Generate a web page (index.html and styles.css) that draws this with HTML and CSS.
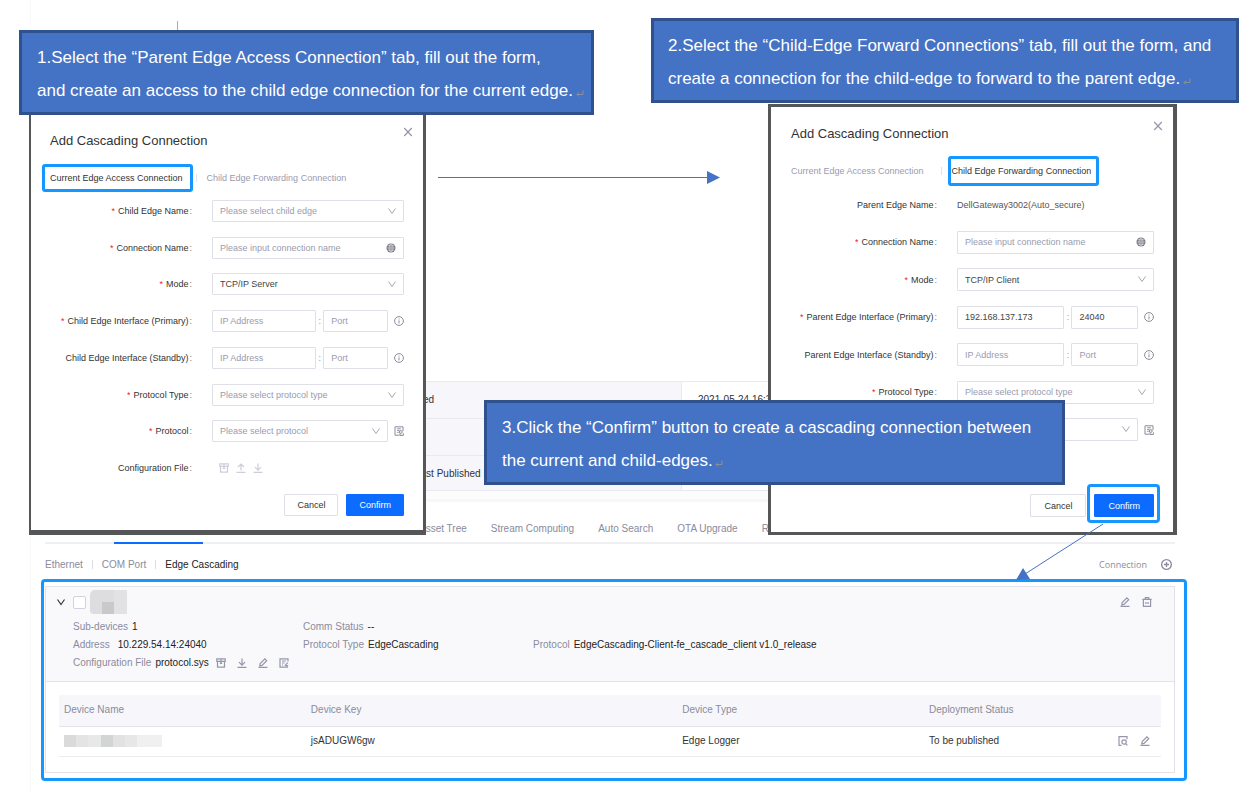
FILE: index.html
```html
<!DOCTYPE html>
<html lang="en">
<head>
<meta charset="utf-8">
<title>Add Cascading Connection</title>
<link rel="stylesheet" href="styles.css">
</head>
<body>
<svg class="sprite" aria-hidden="true">
  <symbol id="chevron" viewBox="0 0 10 10"><path d="M1.5 2.5 5 7.5 8.5 2.5"/></symbol>
  <symbol id="close" viewBox="0 0 10 10"><path d="M1.2 1 8.8 9M8.8 1 1.2 9"/></symbol>
  <symbol id="globe" viewBox="0 0 10 10"><circle cx="5" cy="5" r="4.5" fill="currentColor" stroke="none"/><g stroke="#fff" stroke-width=".5"><ellipse cx="5" cy="5" rx="2" ry="4.2"/><path d="M5 .8v8.4M.8 5h8.4M1.5 2.8h7M1.5 7.2h7"/></g></symbol>
  <symbol id="info" viewBox="0 0 10 10"><circle cx="5" cy="5" r="4.4"/><path d="M5 4.4v3M5 2.5v1"/></symbol>
  <symbol id="doc" viewBox="0 0 10 10"><path d="M9 5V.8H1v8.4h4.5M3.2 2.8h3.6M3.2 4.6h2.2M3.2 6.4h1.4"/><circle cx="6.8" cy="6" r="1.4"/><path d="M6 7.5v1.9h3.4V7.3"/></symbol>
  <symbol id="box" viewBox="0 0 10 10"><path d="M.8.9h8.4v2.4H.8zM1.5 3.3v5.8h7V3.3M3.8 5.3h2.4M5 .9v4.4"/></symbol>
  <symbol id="up" viewBox="0 0 10 10"><path d="M5 7.4V1M2 4l3-3 3 3M.5 9.4h9"/></symbol>
  <symbol id="down" viewBox="0 0 10 10"><path d="M5 .4v6.8M2 4.2l3 3 3-3M.5 9.4h9"/></symbol>
  <symbol id="pen" viewBox="0 0 10 10"><path d="M1.8 7.7 2.2 5.6 6.9.9 8.7 2.7 4 7.4zM.5 9.4h9"/></symbol>
  <symbol id="trash" viewBox="0 0 10 10"><path d="M.3 2.4h9.4M3.3 2.4V.7h3.4v1.7M1.4 2.4v6.9h7.2V2.4M3.9 5v2M6.1 5v2"/></symbol>
  <symbol id="docpen" viewBox="0 0 10 10"><path d="M9 3.6V.8H1v8.4h8M3 3h4M3 5h2.5M3 7h1M5.8 7.6 8.8 4.6M6.8 7.6h2.4"/></symbol>
  <symbol id="docfind" viewBox="0 0 10 10"><path d="M9 3.2V.7H1v8.6h2.4M9.4 9.4 7.8 7.8"/><circle cx="6.1" cy="6" r="2.2"/></symbol>
  <symbol id="plus" viewBox="0 0 10 10"><circle cx="5" cy="5" r="4.4"/><path d="M5 2.7v4.6M2.7 5h4.6"/></symbol>
  <symbol id="return" viewBox="0 0 10 10"><path d="M8 1.5v4H2M4 3.5l-2 2 2 2"/></symbol>
</svg>

<main class="scene">
  <section class="console">
    <div class="summary">
      <div class="summary-row"><span class="summary-label">ed</span><span class="summary-value">2021-05-24 16:3</span></div>
      <div class="summary-row"><span class="summary-label"></span><span class="summary-value"></span></div>
      <div class="summary-row"><span class="summary-label">Last Published R</span><span class="summary-value"></span></div>
    </div>
    <nav class="main-tabs">
      <a href="#assets">Asset Tree</a><a href="#stream">Stream Computing</a><a href="#search">Auto Search</a><a href="#ota">OTA Upgrade</a><a href="#r">R</a>
    </nav>
    <div class="sub-bar">
      <nav class="sub-tabs">
        <a href="#ethernet">Ethernet</a><a href="#com">COM Port</a><a class="current" href="#cascading">Edge Cascading</a>
      </nav>
      <button class="add" type="button">Connection <svg class="icon"><use href="#plus"/></svg></button>
    </div>
    <article class="card">
      <header class="card-head">
        <div class="card-title">
          <button class="bare dark" type="button" aria-label="Collapse"><svg class="icon"><use href="#chevron"/></svg></button>
          <input class="check" type="checkbox" aria-label="Select connection">
          <span class="mosaic"></span>
          <span class="actions">
            <button class="bare" type="button" aria-label="Edit"><svg class="icon"><use href="#pen"/></svg></button>
            <button class="bare" type="button" aria-label="Delete"><svg class="icon"><use href="#trash"/></svg></button>
          </span>
        </div>
        <dl class="facts">
          <div><dt>Sub-devices</dt><dd>1</dd></div>
          <div class="span-rest"><dt>Comm Status</dt><dd>--</dd></div>
          <div><dt class="wide">Address</dt><dd>10.229.54.14:24040</dd></div>
          <div><dt>Protocol Type</dt><dd>EdgeCascading</dd></div>
          <div><dt>Protocol</dt><dd>EdgeCascading-Client-fe_cascade_client v1.0_release</dd></div>
          <div><dt>Configuration File</dt><dd>protocol.sys</dd>
            <dd class="file-tools">
              <button class="bare" type="button" aria-label="Package"><svg class="icon"><use href="#box"/></svg></button>
              <button class="bare" type="button" aria-label="Download"><svg class="icon"><use href="#down"/></svg></button>
              <button class="bare" type="button" aria-label="Edit file"><svg class="icon"><use href="#pen"/></svg></button>
              <button class="bare" type="button" aria-label="Edit notes"><svg class="icon"><use href="#docpen"/></svg></button>
            </dd>
          </div>
        </dl>
      </header>
      <div class="card-body">
        <table class="devices">
          <thead><tr><th class="c1">Device Name</th><th class="c2">Device Key</th><th class="c1">Device Type</th><th colspan="2">Deployment Status</th></tr></thead>
          <tbody><tr><td><span class="mosaic-strip"></span></td><td>jsADUGW6gw</td><td>Edge Logger</td><td>To be published</td>
            <td><span class="row-tools"><button class="bare" type="button" aria-label="View"><svg class="icon"><use href="#docfind"/></svg></button><button class="bare" type="button" aria-label="Edit device"><svg class="icon"><use href="#pen"/></svg></button></span></td></tr></tbody>
        </table>
      </div>
    </article>
  </section>

  <section class="dialog dialog-child" aria-label="Child edge connection">
    <button class="close bare" type="button" aria-label="Close"><svg class="icon"><use href="#close"/></svg></button>
    <h2>Add Cascading Connection</h2>
    <div class="tabs"><button class="tab active" type="button">Current Edge Access Connection</button><button class="tab" type="button">Child Edge Forwarding Connection</button></div>
    <form class="form">
      <div class="row"><label class="req" for="a1">Child Edge Name</label><div class="control"><span class="pick"><select id="a1" class="empty"><option>Please select child edge</option></select><svg class="icon"><use href="#chevron"/></svg></span></div></div>
      <div class="row"><label class="req" for="a2">Connection Name</label><div class="control"><span class="pick"><input id="a2" type="text" placeholder="Please input connection name"><svg class="icon globe"><use href="#globe"/></svg></span></div></div>
      <div class="row"><label class="req" for="a3">Mode</label><div class="control"><span class="pick"><select id="a3"><option>TCP/IP Server</option></select><svg class="icon"><use href="#chevron"/></svg></span></div></div>
      <div class="row"><label class="req" for="a4">Child Edge Interface (Primary)</label><div class="control"><input id="a4" class="ip" type="text" placeholder="IP Address"><span class="colon">:</span><input class="port" type="text" placeholder="Port" aria-label="Primary port"><svg class="icon side"><use href="#info"/></svg></div></div>
      <div class="row"><label for="a5">Child Edge Interface (Standby)</label><div class="control"><input id="a5" class="ip" type="text" placeholder="IP Address"><span class="colon">:</span><input class="port" type="text" placeholder="Port" aria-label="Standby port"><svg class="icon side"><use href="#info"/></svg></div></div>
      <div class="row"><label class="req" for="a6">Protocol Type</label><div class="control"><span class="pick"><select id="a6" class="empty"><option>Please select protocol type</option></select><svg class="icon"><use href="#chevron"/></svg></span></div></div>
      <div class="row"><label class="req" for="a7">Protocol</label><div class="control"><span class="pick"><select id="a7" class="empty"><option>Please select protocol</option></select><svg class="icon"><use href="#chevron"/></svg></span><svg class="icon side"><use href="#doc"/></svg></div></div>
      <div class="row"><span class="label">Configuration File</span><div class="control upload"><svg class="icon"><use href="#box"/></svg><svg class="icon"><use href="#up"/></svg><svg class="icon"><use href="#down"/></svg></div></div>
    </form>
    <footer><button class="btn" type="button">Cancel</button><button class="btn primary" type="button">Confirm</button></footer>
  </section>

  <section class="dialog dialog-parent" aria-label="Parent edge connection">
    <button class="close bare" type="button" aria-label="Close"><svg class="icon"><use href="#close"/></svg></button>
    <h2>Add Cascading Connection</h2>
    <div class="tabs"><button class="tab" type="button">Current Edge Access Connection</button><button class="tab active" type="button">Child Edge Forwarding Connection</button></div>
    <form class="form">
      <div class="row"><span class="label">Parent Edge Name</span><div class="control">DellGateway3002(Auto_secure)</div></div>
      <div class="row"><label class="req" for="b2">Connection Name</label><div class="control"><span class="pick"><input id="b2" type="text" placeholder="Please input connection name"><svg class="icon globe"><use href="#globe"/></svg></span></div></div>
      <div class="row"><label class="req" for="b3">Mode</label><div class="control"><span class="pick"><select id="b3"><option>TCP/IP Client</option></select><svg class="icon"><use href="#chevron"/></svg></span></div></div>
      <div class="row"><label class="req" for="b4">Parent Edge Interface (Primary)</label><div class="control"><input id="b4" class="ip" type="text" value="192.168.137.173"><span class="colon">:</span><input class="port" type="text" value="24040" aria-label="Primary port"><svg class="icon side"><use href="#info"/></svg></div></div>
      <div class="row"><label for="b5">Parent Edge Interface (Standby)</label><div class="control"><input id="b5" class="ip" type="text" placeholder="IP Address"><span class="colon">:</span><input class="port" type="text" placeholder="Port" aria-label="Standby port"><svg class="icon side"><use href="#info"/></svg></div></div>
      <div class="row"><label class="req" for="b6">Protocol Type</label><div class="control"><span class="pick"><select id="b6" class="empty"><option>Please select protocol type</option></select><svg class="icon"><use href="#chevron"/></svg></span></div></div>
      <div class="row"><span></span><div class="control"><span class="pick"><select aria-label="Protocol"><option></option></select><svg class="icon"><use href="#chevron"/></svg></span><svg class="icon side"><use href="#doc"/></svg></div></div>
      <div class="row"></div>
    </form>
    <footer><button class="btn" type="button">Cancel</button><button class="btn primary marked" type="button">Confirm</button></footer>
  </section>

  <svg class="arrows" width="1249" height="794" aria-hidden="true">
    <path class="tick" d="M177.500 21v9"/>
    <path d="M438 177.500h270M1103 524l-78 50"/>
    <path class="head" d="M707 171l13 6.500-13 6.500zM1016 580l7-12 7 11z"/>
  </svg>

  <p class="callout callout-1">1.Select the “Parent Edge Access Connection” tab, fill out the form,<br>and create an access to the child edge connection for the current edge. <svg class="return"><use href="#return"/></svg></p>
  <p class="callout callout-2">2.Select the “Child-Edge Forward Connections” tab, fill out the form, and<br>create a connection for the child-edge to forward to the parent edge. <svg class="return"><use href="#return"/></svg></p>
  <p class="callout callout-3">3.Click the “Confirm” button to create a cascading connection between<br>the current and child-edges. <svg class="return"><use href="#return"/></svg></p>
</main>
</body>
</html>
```
FILE: styles.css
```css
* { box-sizing: border-box; }
body { margin: 0; background: #fff; color: #333; font: 10px/18px "Liberation Sans", Arial, sans-serif; }
button, input, select { font: inherit; color: inherit; margin: 0; }
a { color: inherit; text-decoration: none; }
.sprite { display: none; }
.icon { width: 10px; height: 10px; flex: none; fill: none; stroke: currentColor; stroke-width: 1.2; display: block; }
.bare { border: 0; padding: 0; background: none; color: #9596aa; }
.scene { position: relative; min-height: 794px; overflow: hidden; }

/* Console page underneath */
.console { margin: 0 62px 0 30px; padding: 381px 12px 22px 14px; border-left: 1px solid #fafafa; }
.summary { padding-bottom: 8px; border-bottom: 3px solid #f6f6fb; background: #fcfcfd; }
.summary-row { display: flex; height: 37px; border-top: 1px solid #e9e9f0; line-height: 36px; background: #fff; }
.summary-row:last-child { height: 36px; border-bottom: 1px solid #e9e9f0; }
.summary-label { flex: 0 0 637px; padding-left: 370px; background: #f6f6fb; border-right: 1px solid #e9e9f0; }
.summary-row:first-child .summary-label { padding-left: 378px; }
.summary-value { padding-left: 16px; }
.main-tabs { position: relative; display: flex; gap: 24px; height: 42px; padding: 9px 0 0 374px; line-height: 36px; color: #8a8b9c; border-bottom: 2px solid #f0f0f3; }
.main-tabs::after { content: ""; position: absolute; left: 69px; bottom: -2px; width: 89px; height: 2px; background: #0b6cff; }
.sub-bar { display: flex; justify-content: space-between; align-items: center; height: 42px; padding-bottom: 1px; color: #8a8b9c; }
.sub-tabs { display: flex; }
.sub-tabs a + a { display: flex; align-items: center; }
.sub-tabs a + a::before { content: ""; width: 1px; height: 9px; margin: 0 9px; background: #dcdce4; }
.sub-tabs .current { color: #222; }
.add { display: flex; align-items: center; gap: 14px; padding: 0 3px 0 0; border: 0; background: none; color: #8a8b9c; font-family: "Open Sans", sans-serif; font-size: 9px; }
.add .icon { width: 11px; height: 11px; }

.card { position: relative; border: 1px solid #e2e2ea; }
.card::after { content: ""; position: absolute; inset: -8px -13px -9px -5px; border: 3px solid #1597ff; border-radius: 4px; pointer-events: none; }
.card-head { padding: 3px 27px 9px; background: #f9f9fc; border-bottom: 1px solid #e2e2ea; }
.card-title { display: flex; align-items: center; height: 24px; margin-left: -17px; }
.dark { color: #333; }
.check { appearance: none; width: 13px; height: 13px; margin: 0 4px 0 7px; border: 1px solid #d2d2dc; border-radius: 2px; background: #fff; }
.mosaic { width: 37px; height: 24px; border-radius: 5px 0 0 4px; background: linear-gradient(#c9c9cc, #c9c9cc) 12px 12px / 12px 12px no-repeat, linear-gradient(90deg, #dddde0 24px, #e2e2e5 24px); }
.actions { display: flex; gap: 12px; margin-left: auto; margin-right: -5px; }
.facts { display: grid; grid-template-columns: 230px 230px 1fr; margin: 4px 0 0; }
.facts > div { display: flex; align-items: center; gap: 4px; white-space: nowrap; }
.facts .span-rest { grid-column: span 2; }
.facts dt { color: #8a8b9c; }
.facts dt.wide { padding-right: 4px; }
.facts dd { margin: 0; color: #222; }
.facts .file-tools { display: flex; gap: 11px; padding-left: 3px; }
.card-body { padding: 13px 13px 15px; }
.devices { width: 100%; border-collapse: collapse; table-layout: fixed; }
.devices th { height: 31px; padding: 0 5px; text-align: left; font-weight: 400; color: #8a8b9c; background: #f6f6fb; border-bottom: 1px solid #e4e4ec; }
.devices td { height: 30px; padding: 0 5px; border-bottom: 1px solid #ededf1; }
.devices .c1 { width: 22.4%; }
.devices .c2 { width: 33.7%; }
.row-tools { display: flex; justify-content: flex-end; gap: 12px; padding-right: 6px; }
.mosaic-strip { display: block; width: 98px; height: 12px; background: linear-gradient(90deg, #dadada 12px, #e4e4e4 12px 24px, #e8e8e8 24px 37px, #d2d5d4 37px 49px, #e2e2e2 49px 61px, #e7e7e7 61px 73px, #f0f0f0 73px); }

/* Dialog windows */
.dialog { position: absolute; display: flex; flex-direction: column; background: #fff; border: solid #555657; font-size: 9px; }
.dialog-child { left: 29px; top: 112px; width: 397px; height: 423px; padding: 18px 19px 14px; border-width: 1px 3px 5px 2px; --label: 142px; --field: 22px; --mark: -5px -10px -5px -8px; --tab-gap: 24px; --btn-pad: 12px; }
.dialog-parent { left: 768px; top: 104px; width: 409px; height: 431px; padding: 17px 19px 15px 20px; border-width: 3px 4px 3px 3px; --label: 146px; --field: 23px; --mark: -6px -8px -6px -4px; --tab-gap: 28px; --btn-pad: 13px; }
.dialog h2 { margin: 0; font-size: 13px; line-height: 20px; font-weight: 400; }
.close { position: absolute; top: 14px; right: 10px; }
.tabs { display: flex; align-items: center; height: 18px; margin: 18px 0 13px; }
.tab { position: relative; border: 0; padding: 0; background: none; color: #9a9baf; white-space: nowrap; }
.tab.active { color: #333; }
.tab + .tab { margin-left: var(--tab-gap); }
.tab + .tab::before { content: ""; position: absolute; left: -11px; top: 5px; width: 1px; height: 8px; background: #e2e2ea; }
.tab.active::after { content: ""; position: absolute; inset: var(--mark); border: 3px solid #1597ff; border-radius: 3px; }
.form { flex: 1; display: flex; flex-direction: column; justify-content: space-between; }
.row { display: grid; grid-template-columns: var(--label) 1fr; gap: 20px; align-items: center; height: var(--field); }
.row label, .row .label { text-align: right; white-space: nowrap; }
.row label::after, .row .label::after { content: ":"; margin-left: 1px; color: #777; }
.row .req::before { content: "*"; margin-right: 3px; color: #f5222d; }
.control { display: flex; align-items: center; min-width: 0; color: #555; }
.control input, .control select { appearance: none; width: 100%; min-width: 0; height: var(--field); padding: 0 7px; border: 1px solid #dfdfe8; border-radius: 1px; background: #fff; color: #444; outline: 0; }
.control .empty, .control input::placeholder { color: #9a9baf; opacity: 1; }
.pick { position: relative; flex: 1; display: flex; }
.pick .icon { position: absolute; right: 7px; top: 6px; color: #a5a6b5; stroke-width: 1; pointer-events: none; }
.pick .globe { right: 8px; color: #6c6d7c; }
.control .ip { flex: 105 1 105px; }
.control .port { flex: 65 1 65px; }
.colon { flex: none; width: 7px; text-align: center; color: #999; }
.side { margin-left: 6px; color: #8a8b9c; stroke-width: 1; }
.upload { gap: 7px; padding-left: 7px; color: #ceced8; }
.dialog footer { display: flex; justify-content: flex-end; gap: 8px; margin-top: 15px; }
.btn { position: relative; height: var(--field); padding: 0 var(--btn-pad); border: 1px solid #dfdfe8; border-radius: 1px; background: #fff; line-height: 20px; }
.primary { border-color: #0b6cff; background: #0b6cff; color: #fff; }
.marked::after { content: ""; position: absolute; inset: -11px -7px -7px -8px; border: 3px solid #1597ff; border-radius: 4px; }

/* Notes and arrows */
.arrows { position: absolute; left: 0; top: 0; pointer-events: none; fill: none; stroke: #4472c4; }
.arrows .head { fill: #4472c4; stroke: none; }
.arrows .tick { stroke: #aaa; }
.callout { position: absolute; margin: 0; padding: 8px 15px; border: 3px solid #2f528f; background: #4472c4; color: #fff; font-size: 17px; line-height: 33px; height: 85px; white-space: nowrap; }
.callout-1 { left: 19px; top: 30px; width: 575px; }
.callout-2 { left: 651px; top: 18px; width: 588px; padding-left: 14px; }
.callout-3 { left: 484px; top: 400px; width: 581px; }
.return { width: 10px; height: 10px; margin-left: -3px; fill: none; stroke: #8c8f99; vertical-align: -3px; }
```
